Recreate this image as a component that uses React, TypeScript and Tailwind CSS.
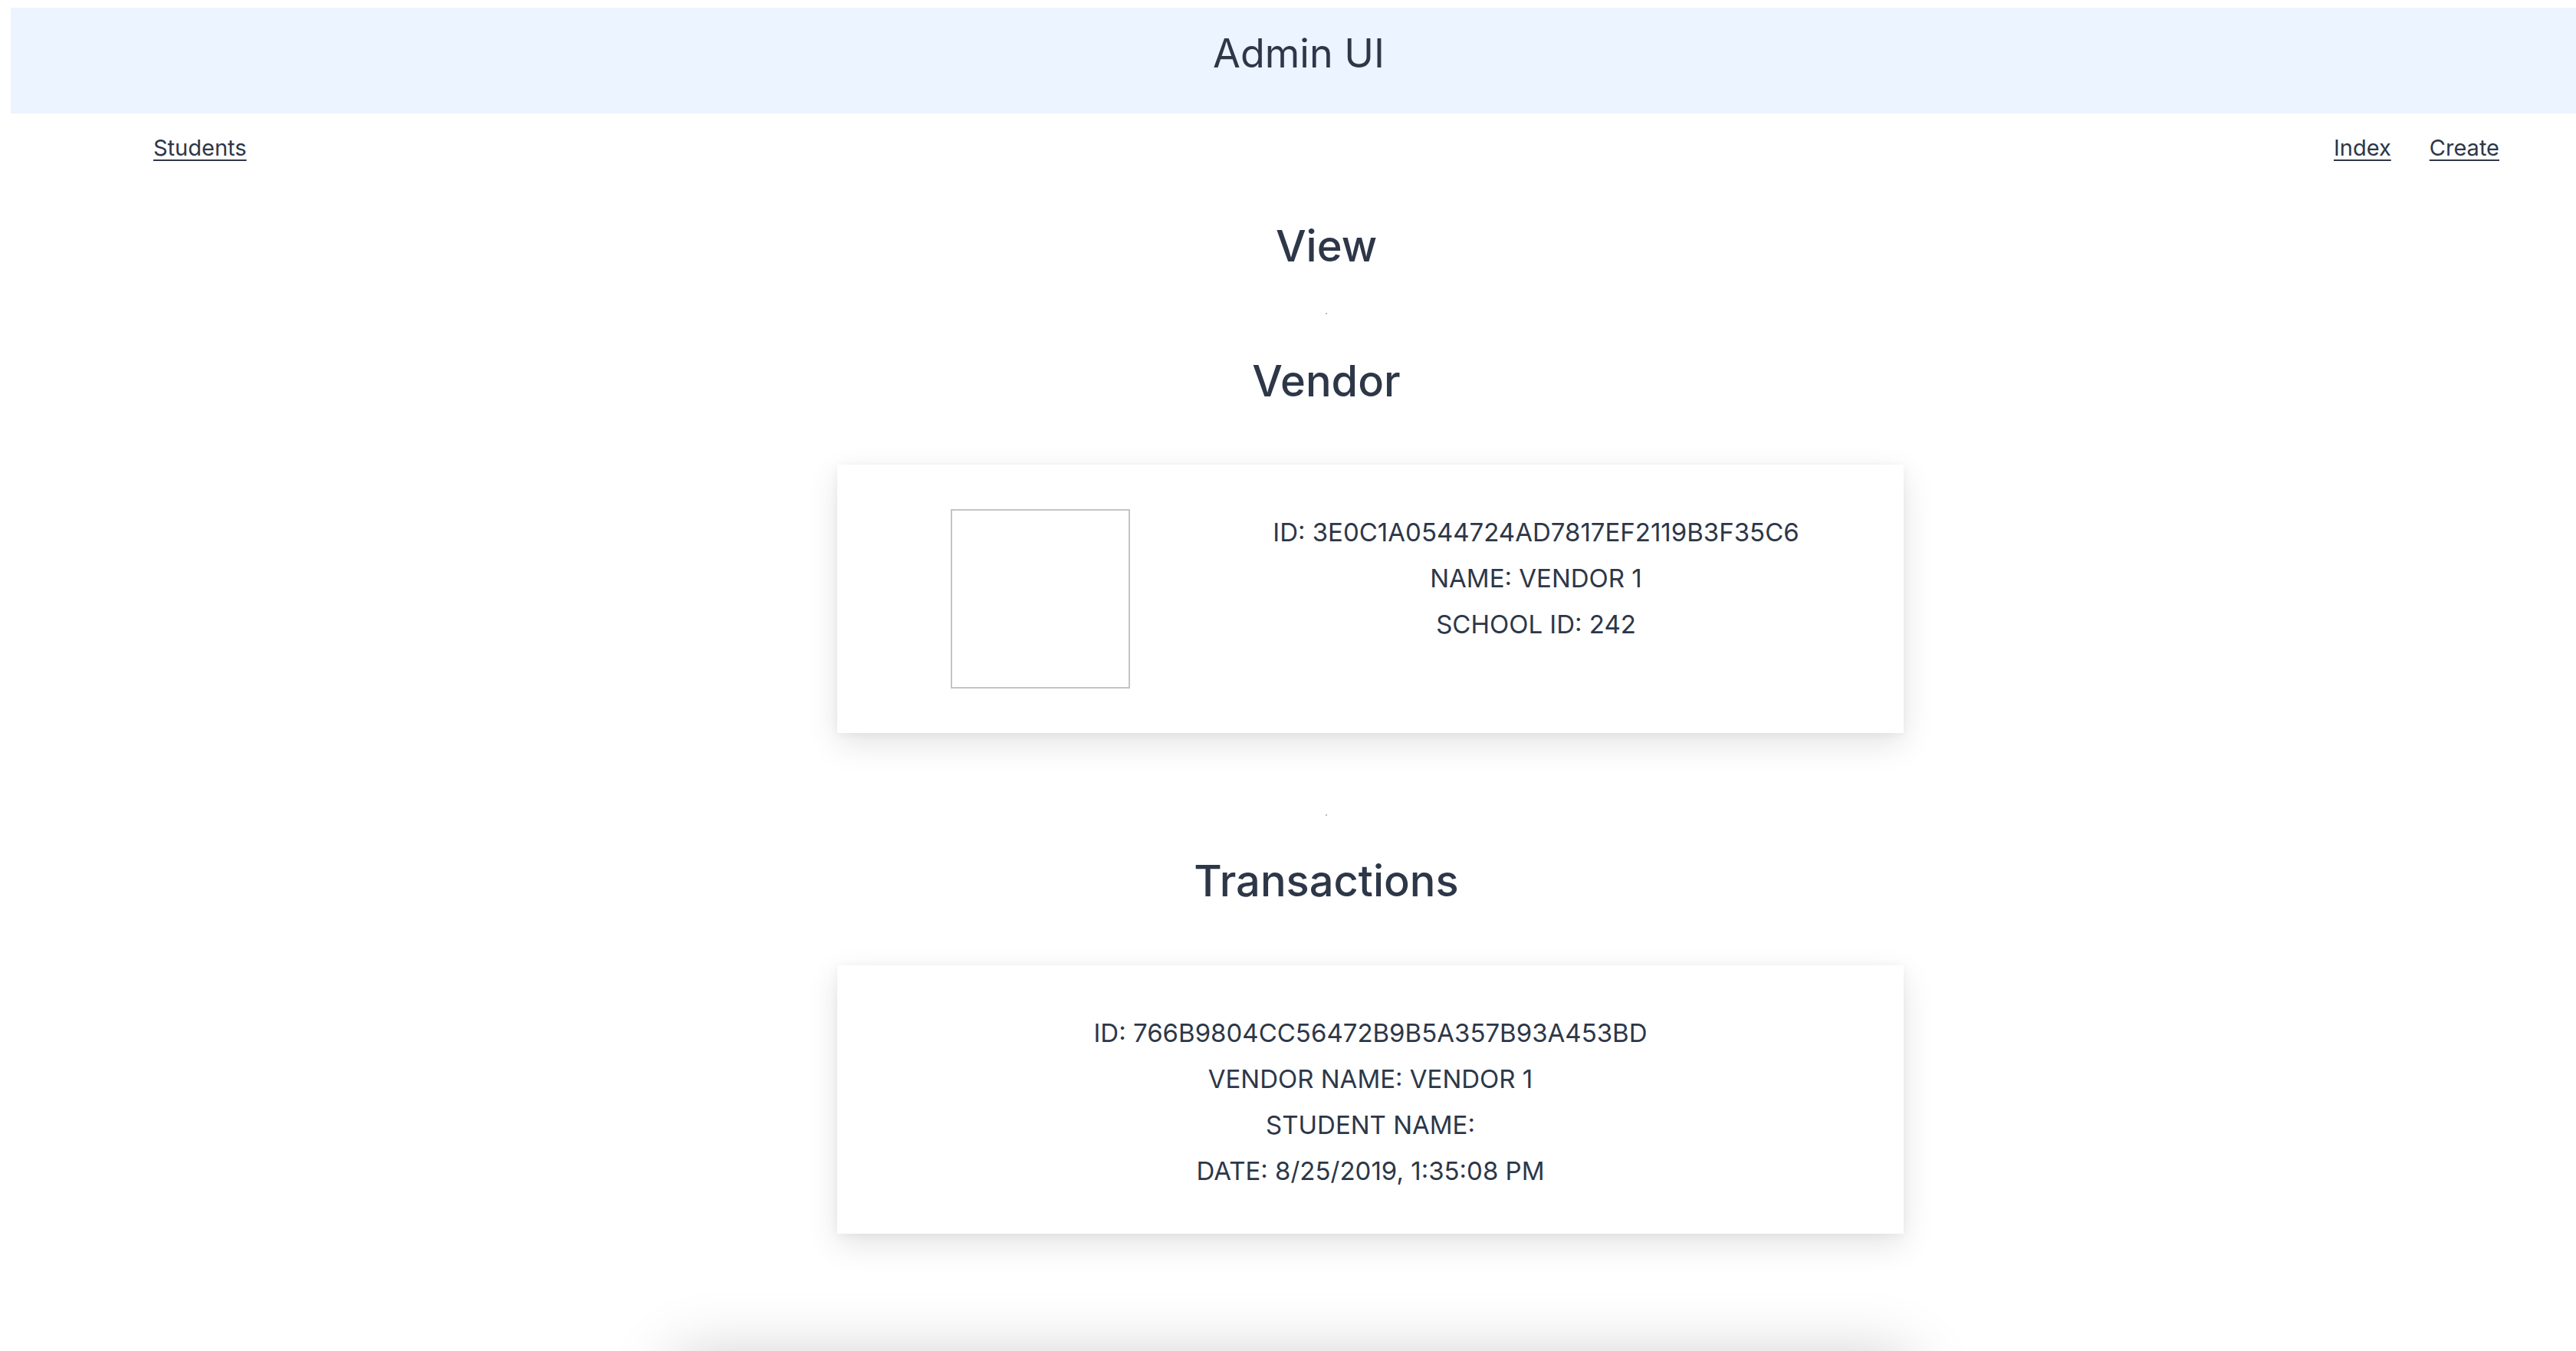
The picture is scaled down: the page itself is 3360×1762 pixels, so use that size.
import React from "react";

const font = { fontFamily: "Inter, 'Noto Sans', sans-serif" };

function Dot() {
  return (
    <div className="flex justify-center pl-[100px]">
      <div className="h-[2px] w-[2px] bg-[#b8b8b8]" />
    </div>
  );
}

function Heading({ children, className }: { children: React.ReactNode; className?: string }) {
  return (
    <h2 className={`pl-[100px] text-center text-[56px] leading-[68px] font-medium text-[#2d3748] ${className ?? ""}`}>
      {children}
    </h2>
  );
}

export default function App() {
  return (
    <div className="min-h-screen w-full overflow-hidden bg-white text-[#2d3748]" style={font}>
      <div className="pt-[10px]">
        <header className="ml-[14px] w-[3360px] bg-[#ebf4ff] pt-[26px] pb-[44px]">
          <h1 className="text-center text-[52px] leading-[68px] font-normal text-[#2d3748]">Admin UI</h1>
        </header>
      </div>

      <nav className="mt-[25px] flex items-center justify-between pl-[200px] pr-[100px] text-[29px] leading-[40px]">
        <a href="#" className="underline underline-offset-[5px] decoration-2">Students</a>
        <div className="flex gap-[50px]">
          <a href="#" className="underline underline-offset-[5px] decoration-2">Index</a>
          <a href="#" className="underline underline-offset-[5px] decoration-2">Create</a>
        </div>
      </nav>

      <Heading className="mt-[74px]">View</Heading>
      <div className="mt-[53px]">
        <Dot />
      </div>
      <Heading className="mt-[53px]">Vendor</Heading>

      <section className="mt-[75px] ml-[1092px] flex w-[1391px] items-start bg-white py-[58px] pl-[148px] shadow-[0_14px_40px_rgba(0,0,0,0.11),0_2px_12px_rgba(0,0,0,0.05)]">
        <div className="h-[234px] w-[234px] shrink-0 border-2 border-[#c4c4c4] bg-white" />
        <div className="ml-[50px] flex-1 text-center text-[33px] leading-[60px]">
          <p>ID: 3E0C1A0544724AD7817EF2119B3F35C6</p>
          <p>NAME: VENDOR 1</p>
          <p>SCHOOL ID: 242</p>
        </div>
      </section>

      <div className="mt-[106px]">
        <Dot />
      </div>
      <Heading className="mt-[51px]">Transactions</Heading>

      <section className="mt-[76px] ml-[1092px] w-[1391px] bg-white pt-[58px] pb-[52px] text-center text-[33px] leading-[60px] shadow-[0_14px_40px_rgba(0,0,0,0.11),0_2px_12px_rgba(0,0,0,0.05)]">
        <p>ID: 766B9804CC56472B9B5A357B93A453BD</p>
        <p>VENDOR NAME: VENDOR 1</p>
        <p>STUDENT NAME:</p>
        <p>DATE: 8/25/2019, 1:35:08 PM</p>
      </section>

      <section className="mt-[170px] ml-[880px] h-[400px] w-[1610px] bg-white shadow-[0_-10px_80px_rgba(0,0,0,0.2)]" />
    </div>
  );
}
